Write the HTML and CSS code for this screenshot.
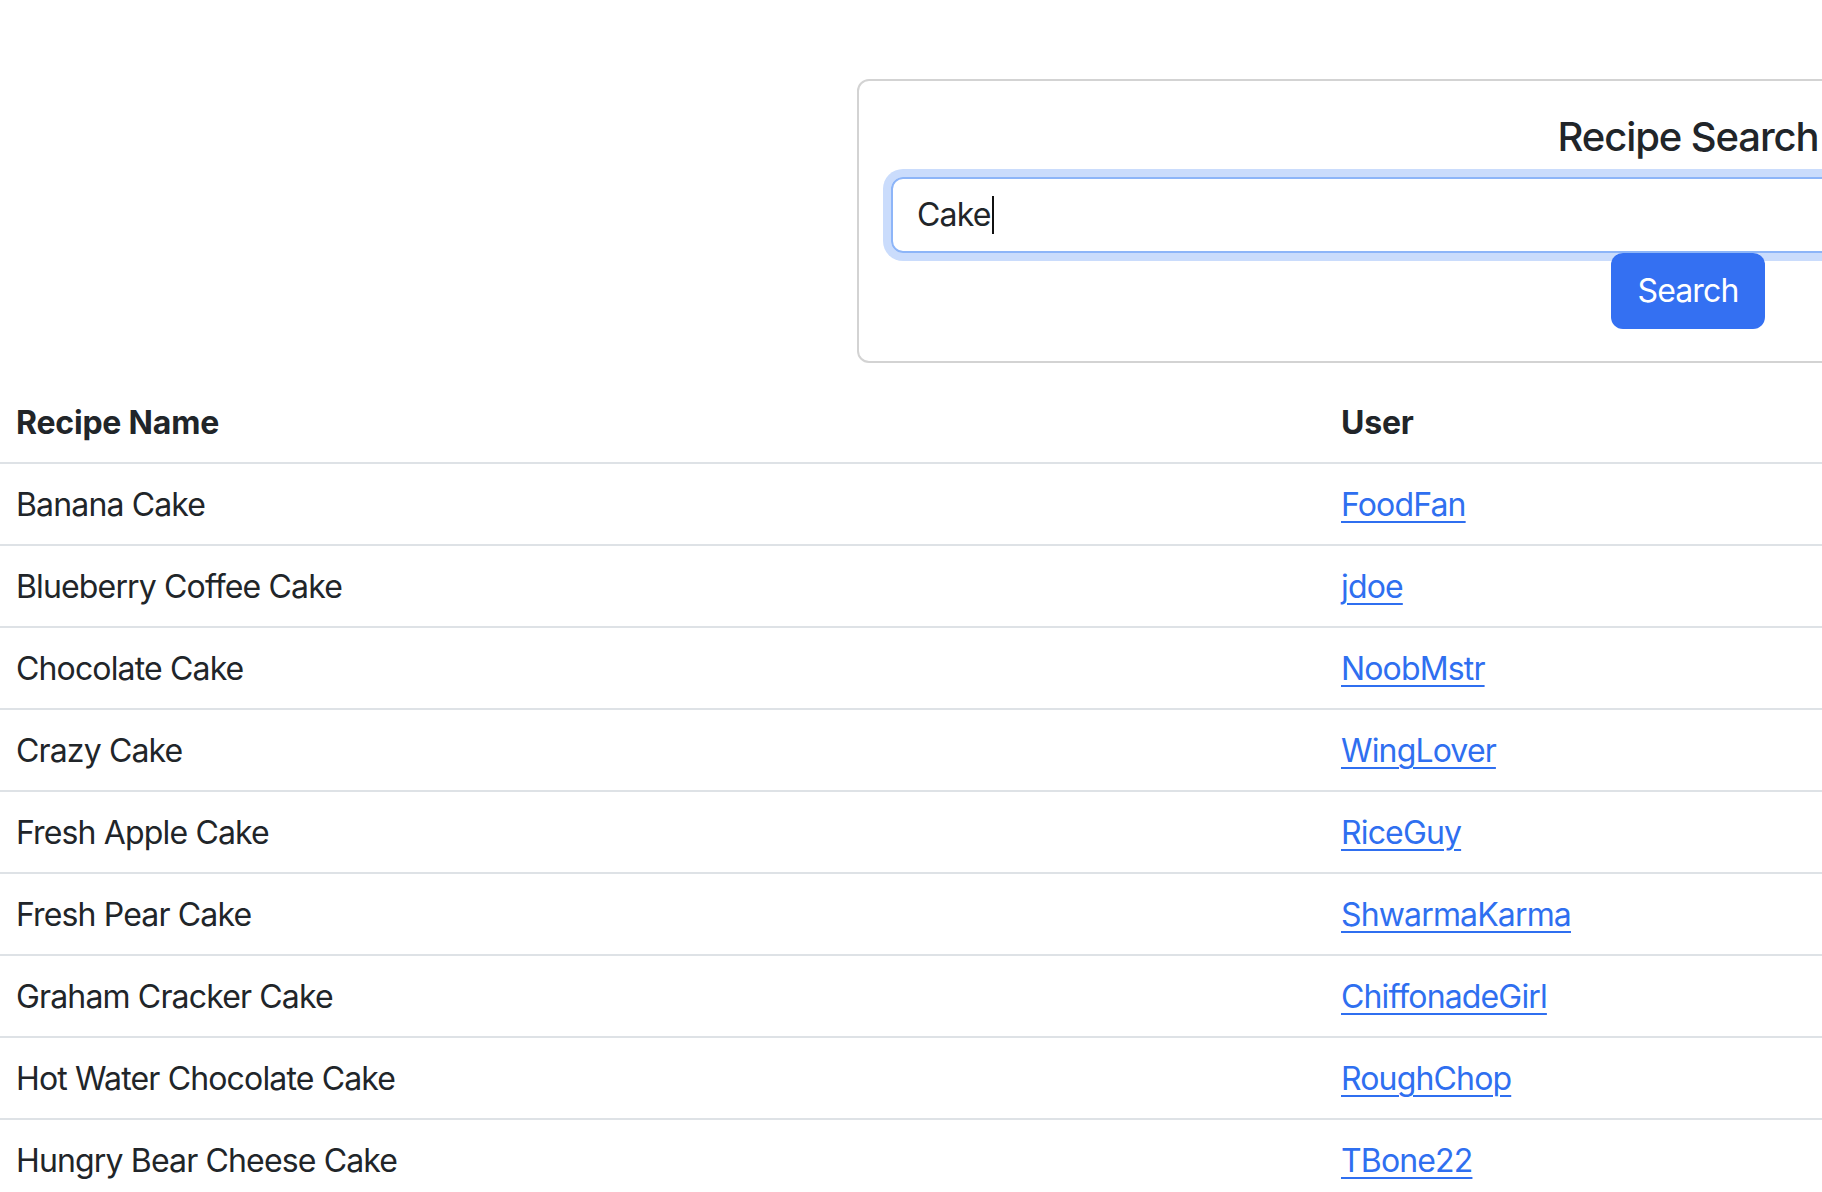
FILE: index.html
```html
<!DOCTYPE html>
<html lang="en">
<head>
<meta charset="utf-8">
<title>Recipe Search</title>
<link rel="stylesheet" href="styles.css">
</head>
<body>
<div class="page">
  <div class="search-row">
    <form class="card" onsubmit="return false;">
      <h5 class="card-title">Recipe Search</h5>
      <div class="search-field" role="textbox">Cake<span class="caret"></span></div>
      <div class="actions">
        <button type="submit" class="btn">Search</button>
      </div>
    </form>
  </div>
  <table class="results">
    <thead>
      <tr><th class="col-name">Recipe Name</th><th>User</th></tr>
    </thead>
    <tbody>
      <tr><td>Banana Cake</td><td><a href="#">FoodFan</a></td></tr>
      <tr><td>Blueberry Coffee Cake</td><td><a href="#">jdoe</a></td></tr>
      <tr><td>Chocolate Cake</td><td><a href="#">NoobMstr</a></td></tr>
      <tr><td>Crazy Cake</td><td><a href="#">WingLover</a></td></tr>
      <tr><td>Fresh Apple Cake</td><td><a href="#">RiceGuy</a></td></tr>
      <tr><td>Fresh Pear Cake</td><td><a href="#">ShwarmaKarma</a></td></tr>
      <tr><td>Graham Cracker Cake</td><td><a href="#">ChiffonadeGirl</a></td></tr>
      <tr><td>Hot Water Chocolate Cake</td><td><a href="#">RoughChop</a></td></tr>
      <tr><td>Hungry Bear Cheese Cake</td><td><a href="#">TBone22</a></td></tr>
    </tbody>
  </table>
</div>
</body>
</html>
```
FILE: styles.css
```css
* { box-sizing: border-box; }
html, body { overflow: hidden; }
body {
  margin: 0;
  background: #fff;
  color: #212529;
  font-family: Inter, Roboto, "Liberation Sans", sans-serif;
  font-size: 32px;
  line-height: 48px;
  letter-spacing: -0.85px;
}
.page {
  width: 3376px;
  padding-top: 79px;
}
.search-row {
  display: flex;
  justify-content: center;
  margin-bottom: 19px;
}
.card {
  width: 1662px;
  border: 2px solid #d3d3d3;
  border-radius: 12px;
  padding: 32px;
  margin: 0;
}
.card-title {
  margin: 0 0 16px;
  text-align: center;
  font-size: 40px;
  line-height: 48px;
  font-weight: 500;
  letter-spacing: -1.1px;
  color: #212529;
}
.search-field {
  height: 76px;
  padding: 12px 24px;
  border: 2px solid #8db5f8;
  border-radius: 12px;
  box-shadow: 0 0 0 8px #cadcfc;
  font-size: 32px;
  line-height: 48px;
  color: #212529;
  display: flex;
  align-items: center;
}
.caret {
  display: inline-block;
  width: 2px;
  height: 38px;
  background: #111;
  margin-left: 2px;
}
.actions {
  display: flex;
  justify-content: center;
}
.btn {
  height: 76px;
  padding: 12px 26px;
  border: 0;
  border-radius: 12px;
  background: #3470f2;
  color: #fff;
  font-family: inherit;
  font-size: 32px;
  line-height: 48px;
  letter-spacing: -0.85px;
}
.results {
  width: 100%;
  border-collapse: collapse;
}
.results th, .results td {
  text-align: left;
  padding: 17px 16px 15px;
  border-bottom: 2px solid #dee2e6;
  vertical-align: top;
}
.results th {
  font-weight: 700;
  letter-spacing: -0.2px;
}
.col-name { width: 1325px; }
.results a {
  color: #2f6ff0;
  text-decoration: underline;
  text-underline-offset: 5px;
  text-decoration-thickness: 2px;
}
```
